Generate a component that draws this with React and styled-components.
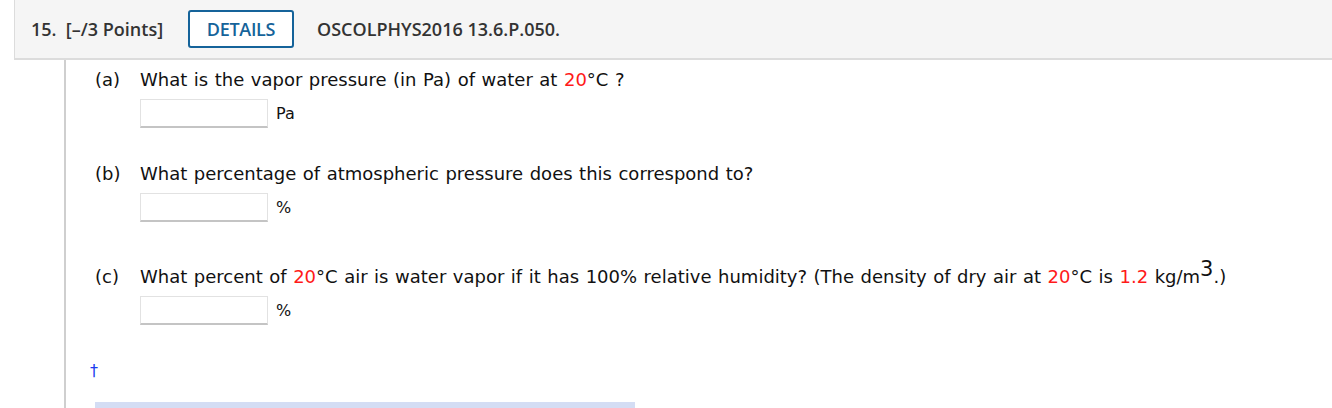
import React from 'react'
import styled, { createGlobalStyle } from 'styled-components'

const GlobalStyle = createGlobalStyle`
  body {
    margin: 0;
    background: #fff;
  }
`

const Page = styled.div`
  width: 1332px;
  height: 408px;
  overflow: hidden;
`

const Header = styled.div`
  margin-left: 14px;
  height: 58px;
  background: #f5f5f5;
  border-left: 1px solid #dcdcdc;
  border-bottom: 2px solid #dcdcdc;
  display: flex;
  align-items: center;
  padding-left: 16px;
  font-family: 'Open Sans', sans-serif;
  font-weight: 600;
  font-size: 18px;
  color: #333;
`

const Points = styled.span`
  width: 157px;
  white-space: nowrap;
`

const DetailsButton = styled.button`
  height: 38px;
  width: 106px;
  border: 2px solid #15639a;
  border-radius: 3px;
  background: #fff;
  color: #15639a;
  font-family: 'Open Sans', sans-serif;
  font-weight: 600;
  font-size: 18px;
  letter-spacing: -0.3px;
  margin-right: 23px;
  padding: 0;
`

const Body = styled.div`
  margin-left: 64px;
  border-left: 2px solid #cfcfcf;
  height: 350px;
  padding-left: 29px;
  font-family: 'DejaVu Sans', Verdana, sans-serif;
  font-size: 18px;
  word-spacing: 0.8px;
  color: #111;
  display: flex;
  flex-direction: column;
`

const Part = styled.div`
  margin-top: ${(p) => p.$top}px;
`

const Question = styled.div`
  display: flex;
  line-height: 20px;
  height: 20px;
  white-space: nowrap;
`

const Label = styled.span`
  width: 45px;
  flex-shrink: 0;
`

const Red = styled.span`
  color: #ff1a1a;
`

const Sup = styled.sup`
  font-size: 21px;
  line-height: 0;
  vertical-align: 7px;
`

const AnswerRow = styled.div`
  display: flex;
  align-items: center;
  margin-top: 9px;
  margin-left: 45px;
`

const Input = styled.div`
  width: 126px;
  height: 26px;
  border: 1px solid #e2e2e2;
  border-bottom: 2px solid #c4c4c4;
  background: #fff;
`

const Unit = styled.span`
  margin-left: 8px;
  font-size: 16px;
`

const Dagger = styled.div`
  margin-top: 36px;
  margin-left: -5px;
  color: #1b3cf0;
  font-size: 16px;
  line-height: 20px;
`

const Bar = styled.div`
  margin-top: 21px;
  width: 540px;
  height: 12px;
  background: #d4ddf4;
`

export default function App() {
  return (
    <Page>
      <GlobalStyle />
      <Header>
        <Points>15.&nbsp; [–/3 Points]</Points>
        <DetailsButton>DETAILS</DetailsButton>
        <span>OSCOLPHYS2016 13.6.P.050.</span>
      </Header>
      <Body>
        <Part $top={10}>
          <Question>
            <Label>(a)</Label>
            <span>
              What is the vapor pressure (in Pa) of water at <Red>20</Red>°C ?
            </span>
          </Question>
          <AnswerRow>
            <Input />
            <Unit>Pa</Unit>
          </AnswerRow>
        </Part>
        <Part $top={36}>
          <Question>
            <Label>(b)</Label>
            <span>What percentage of atmospheric pressure does this correspond to?</span>
          </Question>
          <AnswerRow>
            <Input />
            <Unit>%</Unit>
          </AnswerRow>
        </Part>
        <Part $top={45}>
          <Question>
            <Label>(c)</Label>
            <span>
              What percent of <Red>20</Red>°C air is water vapor if it has 100% relative humidity? (The
              density of dry air at <Red>20</Red>°C is <Red>1.2</Red> kg/m<Sup>3</Sup>.)
            </span>
          </Question>
          <AnswerRow>
            <Input />
            <Unit>%</Unit>
          </AnswerRow>
        </Part>
        <Dagger>†</Dagger>
        <Bar />
      </Body>
    </Page>
  )
}
